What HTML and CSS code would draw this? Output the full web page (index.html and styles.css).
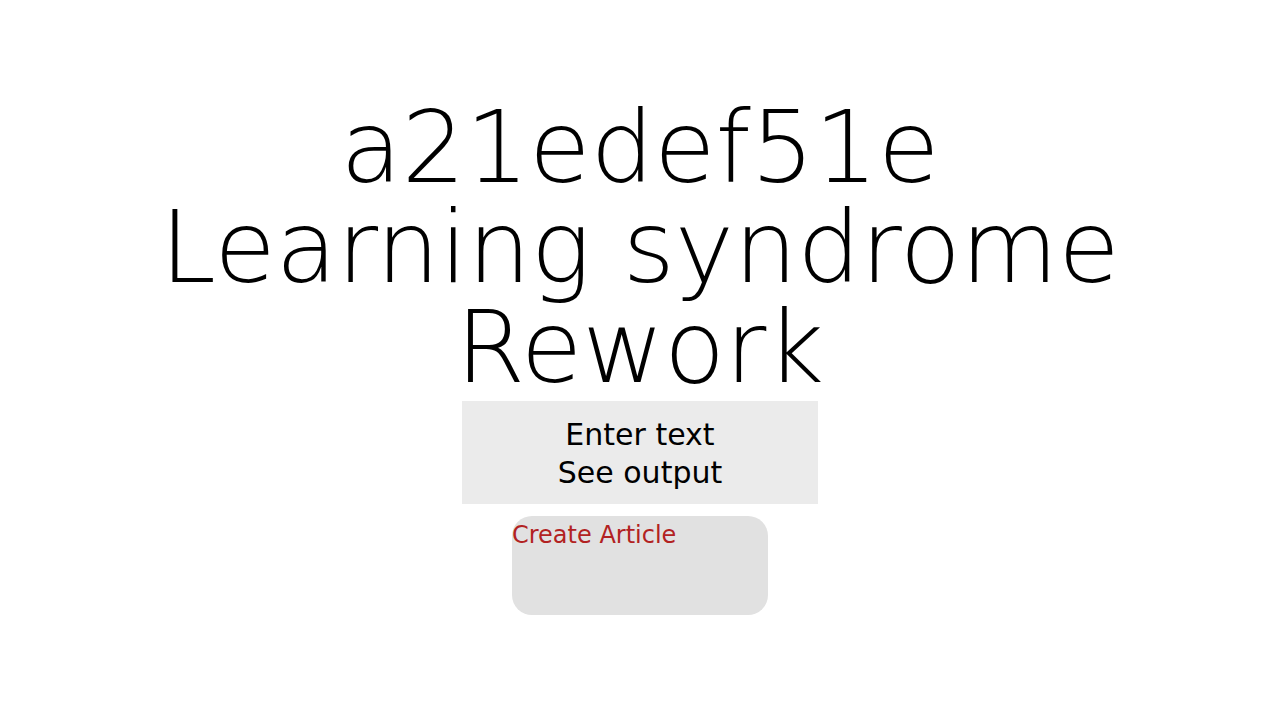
FILE: index.html
```html
<!DOCTYPE html>
<html>
<head>
<meta charset="utf-8">
<link rel="stylesheet" href="styles.css">
</head>
<body>
<main class="page">
  <h1 class="title">a21edef51e<br>Learning syndrome<br>Rework</h1>
  <div class="panel">
    <div class="panel-line">Enter text</div>
    <div class="panel-line">See output</div>
  </div>
  <button class="create">Create Article</button>
</main>
</body>
</html>
```

FILE: styles.css
```css
html, body {
  margin: 0;
  padding: 0;
  background: #ffffff;
}
.page {
  display: flex;
  flex-direction: column;
  align-items: center;
  padding-top: 98px;
  font-family: "DejaVu Sans", sans-serif;
}
.title {
  margin: 0;
  font-weight: 200;
  font-size: 100px;
  line-height: 100px;
  text-align: center;
  color: #000;
}
.panel {
  margin-top: 3px;
  width: 356px;
  height: 103px;
  box-sizing: border-box;
  padding-top: 15px;
  background: #ebebeb;
  display: flex;
  flex-direction: column;
  align-items: center;
  font-size: 30px;
  line-height: 38px;
  color: #000;
}
.create {
  margin-top: 12px;
  width: 256px;
  height: 99px;
  border: none;
  border-radius: 20px;
  background: #e1e1e1;
  padding: 5px 0 0 0;
  display: flex;
  align-items: flex-start;
  justify-content: flex-start;
  font-family: "DejaVu Sans", sans-serif;
  font-size: 24px;
  line-height: 28px;
  color: #b22222;
}
```
